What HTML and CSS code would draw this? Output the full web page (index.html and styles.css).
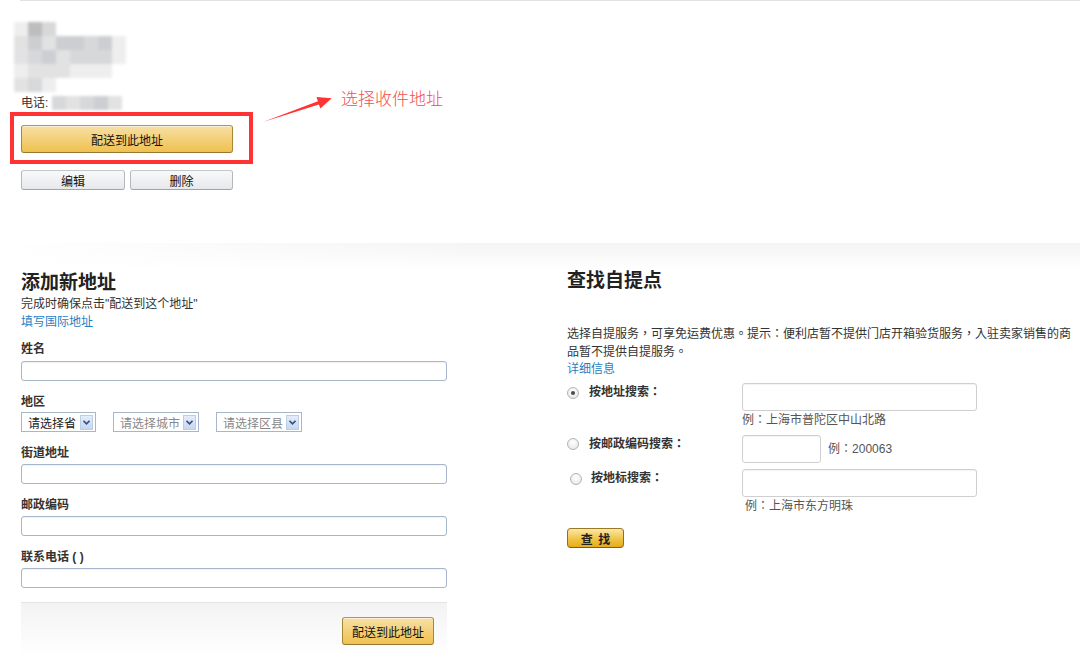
FILE: index.html
```html
<!DOCTYPE html>
<html lang="zh-CN">
<head>
<meta charset="utf-8">
<title>地址</title>
<link rel="stylesheet" href="styles.css">
</head>
<body>
<div class="page">
  <div class="topline"></div>

  <section class="card">
    <div class="mosaic">
      <i class="s1"></i><i class="s5"></i><i class="s3"></i><i></i><i></i><i></i><i></i><i></i>
      <i class="s2"></i><i class="s4"></i><i class="s2"></i><i class="s4"></i><i class="s4"></i><i class="s3"></i><i class="s4"></i><i class="s1"></i>
      <i class="s2"></i><i class="s3"></i><i class="s4"></i><i class="s2"></i><i class="s3"></i><i class="s3"></i><i class="s3"></i><i class="s1"></i>
      <i class="s1"></i><i class="s2"></i><i class="s2"></i><i class="s2"></i><i class="s1"></i><i class="s1"></i><i class="s1"></i><i></i>
      <i class="s2"></i><i class="s3"></i><i class="s1"></i><i></i><i></i><i></i><i></i><i></i>
    </div>
    <div class="phone">
      <span>电话:</span>
      <span class="phone-blur"><i class="s3"></i><i class="s2"></i><i class="s3"></i><i class="s4"></i><i class="s2"></i></span>
    </div>
    <div class="mark">
      <button class="btn btn-yellow btn-ship">配送到此地址</button>
    </div>
    <div class="actions">
      <button class="btn btn-grey btn-edit">编辑</button>
      <button class="btn btn-grey btn-del">删除</button>
    </div>
  </section>

  <div class="annotation">
    <svg class="arrow" width="80" height="40" viewBox="260 90 80 40">
      <polygon points="263,122 318.9,104.4 320.3,108.5 331.7,98.3 316.5,97.1 317.9,101.2" fill="#f33"/>
    </svg>
    <span class="note">选择收件地址</span>
  </div>

  <section class="forms">
    <div class="col-left">
      <h2>添加新地址</h2>
      <p class="sub">完成时确保点击"配送到这个地址"</p>
      <a class="link">填写国际地址</a>

      <label class="lbl first">姓名</label>
      <div class="inp first"></div>

      <label class="lbl">地区</label>
      <div class="selects">
        <div class="sel sel-prov"><span>请选择省</span><span class="dd"><svg width="7" height="5" viewBox="0 0 7 5"><path d="M0.5 0.8 L3.5 3.8 L6.5 0.8" fill="none" stroke="#3b4f78" stroke-width="1.6"/></svg></span></div>
        <div class="sel sel-city muted"><span>请选择城市</span><span class="dd"><svg width="7" height="5" viewBox="0 0 7 5"><path d="M0.5 0.8 L3.5 3.8 L6.5 0.8" fill="none" stroke="#3b4f78" stroke-width="1.6"/></svg></span></div>
        <div class="sel sel-city muted"><span>请选择区县</span><span class="dd"><svg width="7" height="5" viewBox="0 0 7 5"><path d="M0.5 0.8 L3.5 3.8 L6.5 0.8" fill="none" stroke="#3b4f78" stroke-width="1.6"/></svg></span></div>
      </div>

      <label class="lbl">街道地址</label>
      <div class="inp"></div>

      <label class="lbl">邮政编码</label>
      <div class="inp"></div>

      <label class="lbl">联系电话 ( )</label>
      <div class="inp"></div>

      <div class="form-foot">
        <button class="btn btn-yellow btn-submit">配送到此地址</button>
      </div>
    </div>

    <div class="col-right">
      <h2>查找自提点</h2>
      <p class="desc" lang="zh-TW">选择自提服务，可享免运费优惠。提示：便利店暂不提供门店开箱验货服务，入驻卖家销售的商品暂不提供自提服务。</p>
      <a class="link">详细信息</a>

      <div class="row row1">
        <span class="radio-cell"><span class="radio checked"></span></span>
        <span class="opt">按地址搜索<span class="pu" lang="zh-TW">：</span></span>
        <div class="field">
          <div class="box box-wide"></div>
          <div class="eg">例<span class="pu" lang="zh-TW">：</span>上海市普陀区中山北路</div>
        </div>
      </div>

      <div class="row row2">
        <span class="radio-cell"><span class="radio"></span></span>
        <span class="opt">按邮政编码搜索<span class="pu" lang="zh-TW">：</span></span>
        <div class="field inline">
          <div class="box box-short"></div>
          <div class="eg">例<span class="pu" lang="zh-TW">：</span>200063</div>
        </div>
      </div>

      <div class="row row3">
        <span class="radio-cell"><span class="radio"></span></span>
        <span class="opt">按地标搜索<span class="pu" lang="zh-TW">：</span></span>
        <div class="field">
          <div class="box box-wide"></div>
          <div class="eg">例<span class="pu" lang="zh-TW">：</span>上海市东方明珠</div>
        </div>
      </div>

      <button class="btn btn-find">查 找</button>
    </div>
  </section>
</div>
</body>
</html>
```

FILE: styles.css
```css
* { box-sizing: border-box; }
html, body { margin: 0; padding: 0; background: #fff; }
body {
  width: 1080px;
  height: 663px;
  overflow: hidden;
  font-family: "Liberation Sans", "Noto Sans CJK SC", sans-serif;
  font-size: 12px;
  color: #333;
}
.page { position: relative; width: 1080px; }
.pu {
  font-family: "Noto Sans CJK TC", "Noto Sans CJK SC", sans-serif;
  line-height: 1;
}

.topline { height: 1px; margin-left: 20px; background: #e2e2e2; }

/* address card */
.card { height: 242px; padding: 21px 0 0 21px; }
.mosaic {
  display: grid;
  grid-template-columns: repeat(8, 14px);
  grid-auto-rows: 14px;
  margin-left: -7px;
  width: 112px;
  filter: blur(1.5px);
}
.mosaic i, .phone-blur i { display: block; }
.s1 { background: #eeeeee; }
.s2 { background: #e2e2e3; }
.s3 { background: #d7d8d9; }
.s4 { background: #cdced2; }
.s5 { background: #bdbdbd; }

.phone { display: flex; align-items: center; height: 18px; margin-top: 2px; line-height: 18px; color: #333; }
.phone-blur { display: flex; margin-left: 4px; filter: blur(1.5px); }
.phone-blur i { width: 14px; height: 14px; }

.mark {
  width: 243px;
  margin-left: -11px;
  border: 4px solid #f33;
  padding: 9px 16px 7px 7px;
}

.btn {
  display: flex;
  align-items: center;
  justify-content: center;
  margin: 0;
  padding: 0;
  font-family: "Liberation Sans", "Noto Sans CJK SC", sans-serif;
  font-size: 12px;
  color: #111;
  border: 1px solid;
  border-radius: 3px;
  cursor: pointer;
}
.btn-yellow {
  background: linear-gradient(#f7e0a6, #efc14e);
  border-color: #b8973f #a88734 #957632;
  box-shadow: inset 0 1px 0 rgba(255,255,255,.5);
}
.btn-grey {
  background: linear-gradient(#f8f9fa, #e6e8eb);
  border-color: #c3c6ca #b4b7bc #a0a3a8;
}
.btn-ship { width: 212px; height: 28px; }
.actions { display: flex; gap: 5px; margin-top: 6px; }
.btn-edit { width: 104px; height: 20px; }
.btn-del { width: 103px; height: 20px; }

/* annotation overlay */
.annotation { position: absolute; left: 0; top: 0; }
.arrow { position: absolute; left: 260px; top: 90px; }
.note {
  position: absolute;
  left: 341px;
  top: 86px;
  white-space: nowrap;
  font-family: "Noto Sans CJK SC", sans-serif;
  font-size: 17px;
  line-height: 24px;
  font-weight: 300;
  color: #f24f4f;
}

/* lower section */
.forms {
  display: flex;
  padding: 24px 0 0 21px;
  background:
    linear-gradient(to right, #fff 0%, rgba(255,255,255,0) 45%) 0 0 / 100% 28px no-repeat,
    linear-gradient(#f4f4f4, #fff) 0 0 / 100% 28px no-repeat;
}
h2 {
  margin: 0;
  font-size: 19px;
  line-height: 24px;
  font-weight: bold;
  color: #222;
  font-family: "Noto Sans CJK SC", sans-serif;
}
.link { display: block; color: #1f80c4; line-height: 18px; text-decoration: none; }

.col-left { width: 426px; }
.col-left h2 { margin-top: 2px; }
.sub { margin: 2px 0 0; line-height: 18px; color: #333; }

.lbl { display: block; margin-top: 12px; line-height: 18px; font-weight: bold; color: #333; }
.lbl.first { margin-top: 9px; }
.inp {
  height: 20px;
  margin-top: 2px;
  border: 1px solid #a7b6cb;
  border-radius: 3px;
  background: #fff;
  box-shadow: inset 0 1px 1px rgba(0,0,0,.06);
}
.inp.first { margin-top: 3px; }

.selects { display: flex; gap: 17px; margin-top: 1px; }
.sel {
  display: flex;
  align-items: center;
  justify-content: space-between;
  height: 20px;
  padding: 0 2px 0 6px;
  border: 1px solid #a7b6cb;
  background: #fff;
  color: #222;
}
.sel-prov { width: 75px; }
.sel-city { width: 86px; }
.sel.muted { color: #888; }
.dd {
  display: flex;
  align-items: center;
  justify-content: center;
  width: 13px;
  height: 15px;
  border: 1px solid #bccde6;
  background: linear-gradient(#e4edfb, #c5d7f1);
}

.form-foot {
  display: flex;
  justify-content: flex-end;
  height: 54px;
  margin-top: 14px;
  padding: 14px 13px 0 0;
  border-top: 1px solid #e4e4e4;
  background: linear-gradient(#f3f3f3, #fff);
}
.btn-submit { width: 92px; height: 28px; }

.col-right { width: 512px; margin-left: 120px; }
.desc {
  margin: 33px 0 0;
  line-height: 18px;
  color: #333;
  font-family: "Noto Sans CJK TC", "Noto Sans CJK SC", sans-serif;
}

.row { display: flex; align-items: flex-start; }
.row1 { margin-top: 5px; }
.row2, .row3 { margin-top: 6px; }
.radio-cell { display: flex; width: 22px; flex: none; }
.radio {
  width: 12px;
  height: 12px;
  border: 1px solid #b3b3b3;
  border-radius: 50%;
  background: radial-gradient(circle at 50% 35%, #fff, #e3e3e3);
  position: relative;
}
.radio.checked::after {
  content: "";
  position: absolute;
  left: 3px;
  top: 3px;
  width: 4px;
  height: 4px;
  border-radius: 50%;
  background: #4a4a4a;
}
.row1 .radio { margin-top: 4px; }
.row2 .radio { margin-top: 3px; }
.row3 .radio { margin-top: 4px; margin-left: 3px; }
.opt { width: 153px; flex: none; line-height: 18px; font-weight: bold; color: #333; }
.row3 .opt { padding-left: 2px; }
.field { display: flex; flex-direction: column; }
.field.inline { flex-direction: row; align-items: center; }
.box {
  height: 28px;
  border: 1px solid #cfcfcf;
  border-radius: 3px;
  background: #fff;
  box-shadow: inset 0 1px 1px rgba(0,0,0,.05);
}
.box-wide { width: 235px; }
.box-short { width: 79px; }
.eg { line-height: 18px; color: #555; white-space: nowrap; }
.field.inline .eg { margin-left: 7px; }
.row3 .eg { padding-left: 3px; }

.btn-find {
  width: 57px;
  height: 20px;
  margin-top: 13px;
  border-radius: 4px;
  border-color: #9a7a25 #8f7022 #7a5f1c;
  background: linear-gradient(#fbe7aa, #f0c445 55%, #e6ac17);
  font-weight: bold;
  color: #222;
  word-spacing: 2px;
}
```
